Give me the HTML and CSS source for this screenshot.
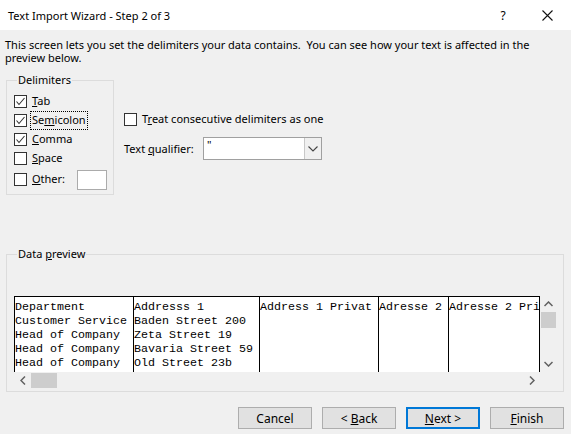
FILE: index.html
```html
<!DOCTYPE html>
<html>
<head>
<meta charset="utf-8">
<title>Text Import Wizard</title>
<link rel="stylesheet" href="styles.css">
</head>
<body>
<div class="window">
  <div class="titlebar">
    <span class="title">Text Import Wizard - Step 2 of 3</span>
    <span class="help">?</span>
    <span class="close"><svg width="11" height="11" viewBox="0 0 11 11"><path d="M0.5 0.5L10.5 10.5M10.5 0.5L0.5 10.5" stroke="#111" stroke-width="1.1" fill="none"/></svg></span>
  </div>
  <div class="content">
    <p class="desc"><span class="line">This screen lets you set the delimiters your data contains.&nbsp; You can see how your text is affected in the</span><span class="line">preview below.</span></p>
    <div class="settings">
      <fieldset class="group delims">
        <legend>Delimiters</legend>
        <div class="check-row"><span class="box"><svg width="11" height="11" viewBox="0 0 11 11"><path d="M1.5 5.5L4 8.5L9.5 2" stroke="#333" stroke-width="1.1" fill="none"/></svg></span><span class="lbl"><u>T</u>ab</span></div>
        <div class="check-row"><span class="box"><svg width="11" height="11" viewBox="0 0 11 11"><path d="M1.5 5.5L4 8.5L9.5 2" stroke="#333" stroke-width="1.1" fill="none"/></svg></span><span class="lbl focus">Se<u>m</u>icolon</span></div>
        <div class="check-row"><span class="box"><svg width="11" height="11" viewBox="0 0 11 11"><path d="M1.5 5.5L4 8.5L9.5 2" stroke="#333" stroke-width="1.1" fill="none"/></svg></span><span class="lbl"><u>C</u>omma</span></div>
        <div class="check-row"><span class="box"></span><span class="lbl"><u>S</u>pace</span></div>
        <div class="check-row other"><span class="box"></span><span class="lbl"><u>O</u>ther:</span><span class="other-input"></span></div>
      </fieldset>
      <div class="options">
        <div class="check-row"><span class="box"></span><span class="lbl">T<u>r</u>eat consecutive delimiters as one</span></div>
        <div class="qualifier">
          <span class="qlabel">Text <u>q</u>ualifier:</span>
          <div class="combo">
            <span class="combo-value">"</span>
            <span class="combo-btn"><svg width="10" height="6" viewBox="0 0 10 6"><path d="M0.5 0.5L5 5L9.5 0.5" stroke="#444" stroke-width="1.1" fill="none"/></svg></span>
          </div>
        </div>
      </div>
    </div>
    <fieldset class="group preview">
      <legend>Data <u>p</u>review</legend>
      <div class="scroller">
        <div class="table">
          <div class="col c1"><div>Department</div><div>Customer Service</div><div>Head of Company</div><div>Head of Company</div><div>Head of Company</div></div>
          <div class="col c2"><div>Addresss 1</div><div>Baden Street 200</div><div>Zeta Street 19</div><div>Bavaria Street 59</div><div>Old Street 23b</div></div>
          <div class="col c3"><div>Address 1 Privat</div></div>
          <div class="col c4"><div>Adresse 2</div></div>
          <div class="col c5"><div>Adresse 2 Privat</div></div>
        </div>
        <div class="vscroll">
          <span class="arrow"><svg width="9" height="6" viewBox="0 0 9 6"><path d="M0.5 5L4.5 1L8.5 5" stroke="#606060" stroke-width="1.5" fill="none"/></svg></span>
          <span class="vthumb"></span>
          <span class="vfill"></span>
          <span class="arrow"><svg width="9" height="6" viewBox="0 0 9 6"><path d="M0.5 1L4.5 5L8.5 1" stroke="#606060" stroke-width="1.5" fill="none"/></svg></span>
        </div>
        <div class="hscroll">
          <span class="harrow"><svg width="6" height="9" viewBox="0 0 6 9"><path d="M5 0.5L1 4.5L5 8.5" stroke="#606060" stroke-width="1.5" fill="none"/></svg></span>
          <span class="hthumb"></span>
          <span class="hfill"></span>
          <span class="harrow"><svg width="6" height="9" viewBox="0 0 6 9"><path d="M1 0.5L5 4.5L1 8.5" stroke="#606060" stroke-width="1.5" fill="none"/></svg></span>
        </div>
        <div class="corner"></div>
      </div>
    </fieldset>
    <div class="buttons">
      <button class="btn">Cancel</button>
      <button class="btn">&lt; <u>B</u>ack</button>
      <button class="btn default"><u>N</u>ext &gt;</button>
      <button class="btn"><u>F</u>inish</button>
    </div>
  </div>
</div>
</body>
</html>
```

FILE: styles.css
```css
* { box-sizing: border-box; }
html, body { margin: 0; padding: 0; }
body {
  background: #f0f0f0;
  font-family: "Noto Sans", "Open Sans", sans-serif;
  font-size: 11px;
  color: #000;
}
.window { width: 571px; height: 434px; overflow: hidden; }
.titlebar {
  height: 30px;
  background: #fff;
  display: flex;
  align-items: center;
  padding-left: 8px;
  font-size: 11px;
}
.title { flex: 1; }
.help { width: 20px; text-align: center; margin-right: 29px; font-size: 12px; }
.close { width: 11px; height: 11px; display: flex; margin-right: 18px; }
.content { padding: 0 7px 0 6px; }
.desc {
  margin: 7px 0 0 -1px;
  display: flex;
  flex-direction: column;
}
.desc .line { display: block; height: 13px; line-height: 15px; }
.settings { display: flex; margin-top: 9px; align-items: flex-start; }
.group {
  margin: 0;
  border: 1px solid #dcdcdc;
  padding: 0;
  min-width: 0;
}
.group legend {
  padding: 0 1px;
  margin-left: 3px;
  line-height: 16px;
}
.delims { width: 108px; height: 123px; padding: 4px 0 0 7px; }
.check-row { display: flex; align-items: center; height: 19px; }
.box {
  width: 13px; height: 13px;
  border: 1px solid #333;
  background: #fff;
  display: flex;
  align-items: center;
  justify-content: center;
  flex: none;
}
.lbl { margin-left: 3px; padding: 1px 1px 2px 1px; border: 1px solid transparent; line-height: 14px; }
.lbl.focus { border: 1px dotted #000; }
.check-row.other { height: 23px; }
.other-input {
  width: 30px; height: 20px;
  background: #fff;
  border: 1px solid #ababab;
  margin-left: 10px;
}
.options { padding: 38px 0 0 10px; }
.qualifier { display: flex; align-items: center; margin-top: 8px; }
.qlabel { width: 79px; }
.combo {
  width: 119px; height: 23px;
  border: 1px solid #a0a0a0;
  background: #fff;
  display: flex;
}
.combo-value { flex: 1; padding: 2px 0 0 3px; line-height: 10px; font-size: 11px; }
.combo-btn {
  width: 17px;
  background: #f0f0f0;
  border-left: 1px solid #c8c8c8;
  display: flex;
  align-items: center;
  justify-content: center;
}
.preview { margin-top: 51px; height: 146px; padding: 34px 7px 0 7px; }
.scroller {
  display: grid;
  grid-template-columns: 526px 16px;
  grid-template-rows: 76px 16px;
}
.table {
  background: #fff;
  border-top: 1px solid #000;
  border-right: 1px solid #000;
  display: flex;
  overflow: hidden;
  padding-top: 3px;
  font-family: "Liberation Mono", "Courier New", monospace;
  font-size: 11.67px;
  line-height: 14px;
  white-space: pre;
}
.col { border-left: 1px solid #000; flex: none; margin-top: -3px; padding-top: 3px; }
.c1 { width: 119px; }
.c2 { width: 126px; }
.c3 { width: 119px; }
.c4 { width: 70px; }
.c5 { width: 100px; }
.vscroll { display: flex; flex-direction: column; align-items: center; }
.arrow { height: 16px; display: flex; align-items: center; justify-content: center; }
.vthumb { width: 15px; height: 16px; background: #cdcdcd; margin-left: 1px; }
.vfill { flex: 1; }
.hscroll { display: flex; align-items: center; }
.harrow { width: 17px; height: 16px; display: flex; align-items: center; justify-content: center; }
.hthumb { width: 26px; height: 15px; background: #cdcdcd; margin-top: 1px; }
.hfill { flex: 1; }
.buttons {
  display: flex;
  justify-content: flex-end;
  gap: 10px;
  margin-top: 15px;
}
.btn {
  width: 74px; height: 22px;
  background: #e1e1e1;
  border: 1px solid #adadad;
  font-family: inherit;
  font-size: 12px;
  padding: 0;
  color: #000;
}
.btn.default { border: 2px solid #0078d7; }
```
